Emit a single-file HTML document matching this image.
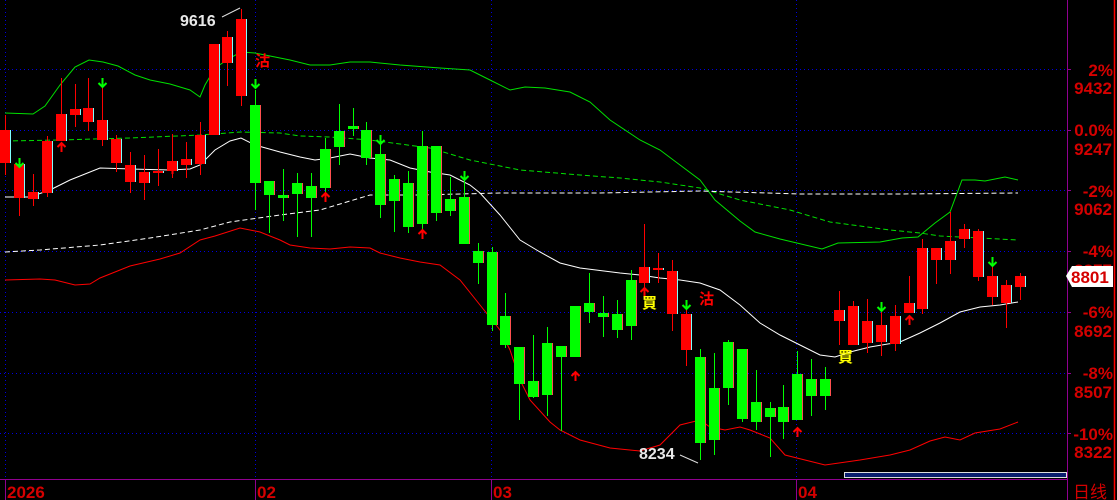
<!DOCTYPE html>
<html><head><meta charset="utf-8"><style>
html,body{margin:0;padding:0;background:#000;width:1117px;height:500px;overflow:hidden}
svg{display:block}
.ax{font-family:"Liberation Sans","Noto Sans CJK SC",sans-serif;font-weight:bold;font-size:17px;fill:#d40000}
</style></head><body>
<svg id="s" width="1117" height="500" xmlns="http://www.w3.org/2000/svg">
<g stroke="#0000e0" stroke-width="1" stroke-dasharray="1,3" shape-rendering="crispEdges">
<line x1="0" y1="69.5" x2="1067" y2="69.5"/><line x1="0" y1="130.5" x2="1067" y2="130.5"/>
<line x1="0" y1="190.5" x2="1067" y2="190.5"/><line x1="0" y1="251.5" x2="1067" y2="251.5"/>
<line x1="0" y1="312.5" x2="1067" y2="312.5"/><line x1="0" y1="373.5" x2="1067" y2="373.5"/>
<line x1="0" y1="433.5" x2="1067" y2="433.5"/>
<line x1="5.5" y1="0" x2="5.5" y2="479"/><line x1="255.5" y1="0" x2="255.5" y2="479"/>
<line x1="491.5" y1="0" x2="491.5" y2="479"/><line x1="796.5" y1="0" x2="796.5" y2="479"/>
</g>
<g fill="none" stroke-width="1">
<polyline stroke="#00e000" points="5,113 33,114 45,106 60,85 75,67 89,60 103,62 118,66 135,75 150,80 170,84 190,90 200,97 205,85 215,68 230,58 241,52 255,53 270,56 290,60 310,65 330,65 350,62 370,62 400,65 440,68 470,70 490,80 510,90 525,87 545,88 570,92 590,102 610,120 640,140 660,150 680,165 700,180 715,200 740,221 755,232 780,239 822,249 838,243 880,242 902,238 918,237 935,223 950,212 962,180 975,180 985,181 1005,177 1018,180"/>
<polyline stroke="#00e000" stroke-dasharray="5,3" points="5,141 60,140 130,138 200,135 241,132 280,133 300,136 330,137 370,140 430,148 470,160 520,170 580,175 620,178 660,182 700,188 740,200 790,210 830,222 890,230 920,233 940,236 980,238 1018,240"/>
<polyline stroke="#ffffff" points="5,197 30,197 50,190 70,180 90,172 100,168 130,169 170,170 190,169 200,165 215,150 230,141 241,138 255,145 280,152 300,157 315,160 330,158 350,154 370,158 390,160 410,168 430,172 450,175 470,185 480,193 500,215 520,240 540,252 560,263 580,268 620,273 640,275 660,278 680,280 700,283 720,290 740,305 760,323 780,335 800,345 820,355 835,357 850,352 870,347 900,342 920,333 940,323 960,312 980,307 1000,305 1018,302"/>
<polyline stroke="#ffffff" stroke-dasharray="5,3" points="5,252 40,250 100,245 150,238 200,230 230,222 280,215 320,210 370,195 420,195 500,193 600,193 700,191 800,194 900,194 1018,193"/>
<polyline stroke="#ff0000" points="5,280 40,279 55,280 75,285 90,284 100,278 130,266 160,259 180,253 200,240 215,236 240,228 260,232 280,240 290,245 310,248 330,249 350,247 370,248 380,253 400,258 420,262 440,265 460,280 480,305 500,330 510,350 520,380 530,400 550,422 560,430 580,440 610,448 640,451 660,445 680,425 700,420 710,427 725,430 740,427 750,430 770,438 785,455 805,460 825,465 860,460 890,455 910,450 930,441 945,437 960,440 975,433 1000,429 1018,422"/>
</g>
<g id="c"></g>
<text x="180" y="26" font-family="Liberation Sans" font-weight="bold" font-size="16" fill="#e8e8e8">9616</text>
<line x1="222" y1="17" x2="240" y2="8" stroke="#ddd"/>
<text x="639" y="459" font-family="Liberation Sans" font-weight="bold" font-size="16" fill="#e8e8e8">8234</text>
<line x1="680" y1="455" x2="698" y2="463" stroke="#ddd"/>
<g font-family="Liberation Sans,Noto Sans CJK SC,sans-serif" font-size="15" font-weight="bold">
<text x="255" y="66" fill="#ff0000">沽</text>
<text x="699" y="304" fill="#ff0000">沽</text>
<text x="642" y="308" fill="#ffff00">買</text>
<text x="838" y="362" fill="#ffff00">買</text>
</g>
<line x1="1067.5" y1="0" x2="1067.5" y2="500" stroke="#900090"/>
<line x1="1114.5" y1="0" x2="1114.5" y2="500" stroke="#ff0000" stroke-width="1.5"/>
<line x1="0" y1="479.5" x2="1067" y2="479.5" stroke="#900090"/>
<g stroke="#900090"><line x1="5.5" y1="479" x2="5.5" y2="500"/><line x1="255.5" y1="479" x2="255.5" y2="500"/><line x1="491.5" y1="479" x2="491.5" y2="500"/><line x1="796.5" y1="479" x2="796.5" y2="500"/>
<line x1="1067" y1="69.5" x2="1071" y2="69.5"/><line x1="1067" y1="130.5" x2="1071" y2="130.5"/><line x1="1067" y1="190.5" x2="1071" y2="190.5"/><line x1="1067" y1="251.5" x2="1071" y2="251.5"/><line x1="1067" y1="312.5" x2="1071" y2="312.5"/><line x1="1067" y1="373.5" x2="1071" y2="373.5"/><line x1="1067" y1="433.5" x2="1071" y2="433.5"/></g>
<g class="ax" text-anchor="end">
<text x="1113" y="76">2%</text><text x="1112" y="94">9432</text>
<text x="1113" y="136">0.0%</text><text x="1112" y="155">9247</text>
<text x="1113" y="197">-2%</text><text x="1112" y="215">9062</text>
<text x="1113" y="257">-4%</text><text x="1112" y="276">8877</text>
<text x="1113" y="318">-6%</text><text x="1112" y="337">8692</text>
<text x="1113" y="379">-8%</text><text x="1112" y="398">8507</text>
<text x="1113" y="440">-10%</text><text x="1112" y="458">8322</text>
</g>
<path d="M1066,276 L1072,266 L1113,266 L1113,287 L1072,287 Z" fill="#fff"/>
<text class="ax" x="1071" y="283" fill="#e00000">8801</text>
<g class="ax"><text x="7" y="498">2026</text><text x="257" y="498">02</text><text x="493" y="498">03</text><text x="798" y="498">04</text><text x="1073" y="498" font-weight="normal">日线</text></g>
<rect x="844.5" y="472.5" width="222" height="5" fill="#0a1e6e" stroke="#ddd"/>
</svg>
<script>
var d=[[130,163,115,175,'r'],[164,198,158,216,'r'],[192,199,174,206,'r'],[141,193,136,197,'r'],[114,141,78,141,'r'],[109,115,84,127,'r'],[108,122,78,131,'r'],[120,140,80,146,'r'],[139,163,135,172,'r'],[165,182,152,193,'r'],[172,183,155,200,'r'],[171,173,149,186,'r'],[161,171,134,178,'r'],[159,165,142,178,'r'],[135,164,122,175,'r'],[44,135,44,135,'r'],[37,63,31,86,'r'],[19,96,9,106,'r'],
[105,183,90,210,'g'],[181,195,181,233,'g'],[195,198,169,221,'g'],[183,194,173,237,'g'],[186,198,173,237,'g'],[149,188,138,197,'g'],[131,147,104,165,'g'],[126,129,108,136,'g'],[130,158,122,165,'g'],[154,205,138,218,'g'],[179,201,175,232,'g'],[183,227,171,233,'g'],[146,224,131,233,'g'],[146,213,146,221,'g'],[199,211,177,216,'g'],[197,244,178,244,'g'],[251,263,243,284,'g'],[252,325,247,331,'g'],[316,345,293,348,'g'],[347,384,347,420,'g'],[381,397,335,398,'g'],[343,395,327,416,'g'],[346,357,346,431,'g'],[306,357,306,357,'g'],[303,312,273,323,'g'],[313,317,296,337,'g'],[314,330,300,338,'g'],[280,326,270,340,'g'],
[267,283,224,294,'r'],[268,270,253,283,'r'],[271,314,260,331,'r'],[314,350,307,366,'r'],
[357,443,349,460,'g'],[388,440,353,455,'g'],[342,388,340,405,'g'],[349,419,349,422,'g'],[402,422,370,430,'g'],[408,417,402,457,'g'],[407,422,385,439,'g'],[374,420,351,420,'g'],[379,396,359,416,'g'],[379,396,367,410,'g'],
[310,321,291,345,'r'],[306,345,301,345,'r'],[321,343,299,353,'r'],[325,342,310,356,'r'],[316,344,305,351,'r'],[303,313,276,313,'r'],[248,309,239,314,'r'],[248,260,248,284,'r'],[241,260,212,274,'r'],[229,239,224,248,'r'],[231,277,229,281,'r'],[276,297,266,305,'r'],[285,303,280,328,'r'],[276,287,273,300,'r']];
var up={4:143,12:165,23:193,30:230,41:372,46:288,57:428,65:316},dn={1:158,7:78,18:79,27:135,33:171,49:300,63:302,71:257};
var h='';
d.forEach(function(c,i){var x=Math.round(5+13.9*i);var col=c[4]=='r'?'#ff0000':'#00ff00',ed=c[4]=='r'?'#80ffff':'#ff5050';
h+='<line x1="'+(x+.5)+'" y1="'+c[2]+'" x2="'+(x+.5)+'" y2="'+c[3]+'" stroke="'+col+'"/>';
var hh=Math.max(2,c[1]-c[0]);h+='<rect x="'+(x-5)+'" y="'+c[0]+'" width="11" height="'+hh+'" fill="'+col+'"/><rect x="'+(x+5)+'" y="'+c[0]+'" width="1" height="'+hh+'" fill="'+ed+'"/>';
if(up[i]!=null){var y=up[i];h+='<path d="M'+(x-3.5)+','+(y+4)+' L'+(x+.5)+','+y+' L'+(x+4.5)+','+(y+4)+' M'+(x+.5)+','+y+' L'+(x+.5)+','+(y+9)+'" stroke="#ff0000" stroke-width="2" fill="none"/>';}
if(dn[i]!=null){var y=dn[i];h+='<path d="M'+(x+.5)+','+y+' L'+(x+.5)+','+(y+9)+' M'+(x-3.5)+','+(y+5)+' L'+(x+.5)+','+(y+9)+' L'+(x+4.5)+','+(y+5)+'" stroke="#00ff00" stroke-width="2" fill="none"/>';}
});
document.getElementById('c').innerHTML=h;
</script>
</body></html>
